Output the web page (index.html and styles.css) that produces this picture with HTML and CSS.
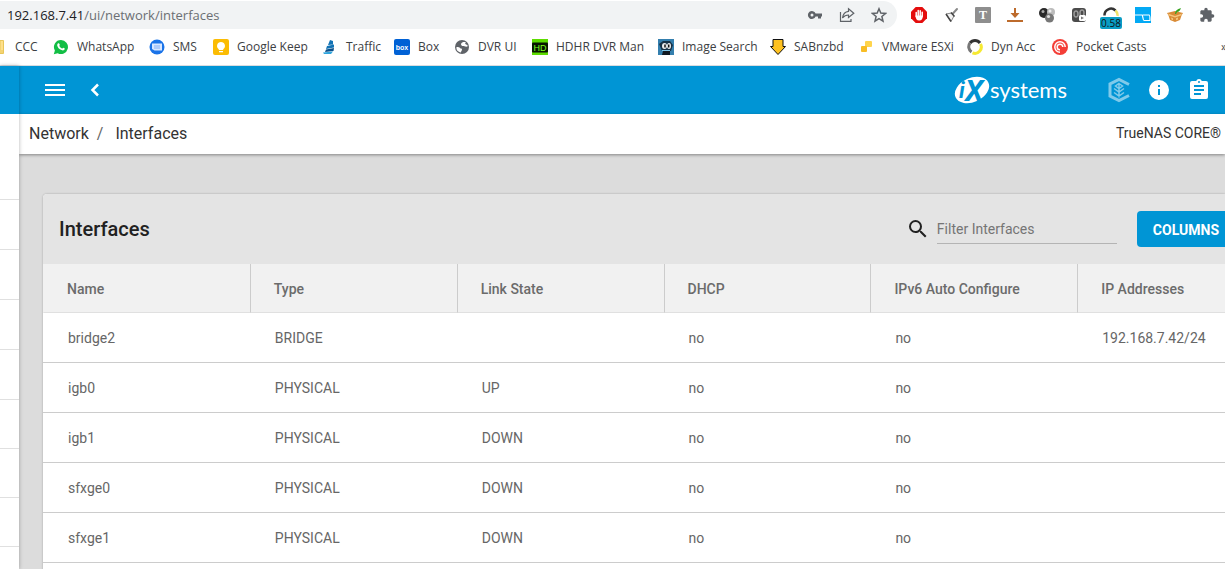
FILE: index.html
```html
<!DOCTYPE html>
<html lang="en">
<head>
    <meta charset="UTF-8">
    <meta name="viewport" content="width=device-width, initial-scale=1.0">
    <title>TrueNAS - Interfaces</title>
    <link rel="stylesheet" href="styles.css">
</head>
<body>

    <!-- Browser toolbar -->
    <div class="toolbar">
        <div class="omnibox">
            <div class="url">192.168.7.41<span class="url-path">/ui/network/interfaces</span></div>
            <button class="tool" aria-label="Passwords">
                <svg width="16" height="16" viewBox="0 0 16 16"><path fill="#5f6368" fill-rule="evenodd" d="M8.6 6.5A4 4 0 1 0 8.6 9.500H11v2h3v-2h1v-3zM5 6.500a1.500 1.500 0 1 1 0 3 1.500 1.500 0 0 1 0-3z"/></svg>
            </button>
            <button class="tool" aria-label="Share">
                <svg width="16" height="16" viewBox="0 0 16 16" fill="none" stroke="#5f6368" stroke-width="1.2"><path d="M1.500 5v9.400H12V12"/><path d="M9.500 1.800l5.300 4.400-5.300 4.300V8C7 8 5 9 3.500 11 4 7.500 6 4.800 9.500 4.400z"/></svg>
            </button>
            <button class="tool" aria-label="Bookmark this page">
                <svg width="16" height="16" viewBox="0 0 16 16" fill="none" stroke="#5f6368" stroke-width="1.5"><path d="M8 1.800l1.800 4.300 4.700.4-3.600 3 1.100 4.600L8 11.700l-4 2.400 1.100-4.600-3.600-3 4.700-.4z"/></svg>
            </button>
        </div>
        <div class="extensions">
            <button class="tool" aria-label="AdBlock">
                <svg width="16" height="16" viewBox="0 0 16 16"><path fill="#e40d0d" d="M4.700 0h6.600L16 4.700v6.600L11.300 16H4.700L0 11.300V4.700z"/><path fill="none" stroke="#fff" stroke-width="1.500" stroke-linecap="round" d="M5.200 5.500v4M7.200 3.500v5M9.200 3.700v5M11.200 5.200v4"/><path fill="#fff" d="M4.500 8.500h7.400c0 3-1.200 5-3.700 5s-3.700-2-3.700-5z"/></svg>
            </button>
            <button class="tool" aria-label="Cleaner">
                <svg width="16" height="16" viewBox="0 0 16 16"><path stroke="#888" stroke-width="2" stroke-linecap="round" d="M14 2L9.500 7"/><path fill="#f2f2f2" stroke="#888" d="M3 7l5.500-1L11 9l-3 5.500z"/><path stroke="#444" stroke-width="1.500" d="M8 5.500l3.500 4M3 7l5 7.500"/></svg>
            </button>
            <button class="tool" aria-label="Text tool">
                <svg width="16" height="16" viewBox="0 0 16 16"><rect width="16" height="16" rx="1" fill="#8e8e8e"/><text class="glyph-t" x="8" y="12" text-anchor="middle">T</text></svg>
            </button>
            <button class="tool" aria-label="Downloads">
                <svg width="16" height="16" viewBox="0 0 16 16"><path fill="#bd6b2c" d="M7 1h2v5h3.500L8 11 3.500 6H7zM0 13h16v2H0z"/></svg>
            </button>
            <button class="tool" aria-label="Spheres">
                <svg width="16" height="16" viewBox="0 0 16 16"><circle cx="5" cy="6" r="5" fill="#292929"/><circle cx="4" cy="4.500" r="1.500" fill="#aaa"/><circle cx="12" cy="5" r="4" fill="#bbb"/><circle cx="11" cy="4" r="1.500" fill="#eee"/><circle cx="10.500" cy="11" r="4.500" fill="#777"/><circle cx="9.500" cy="9.500" r="1.600" fill="#ddd"/></svg>
            </button>
            <button class="tool" aria-label="Recorder">
                <svg width="16" height="16" viewBox="0 0 16 16"><rect x="1" y="1" width="14" height="14" rx="3" fill="#4b4b4b"/><ellipse cx="5" cy="7" rx="2" ry="3" fill="none" stroke="#999" stroke-width="1.500"/><ellipse cx="11" cy="6" rx="2" ry="3" fill="none" stroke="#999" stroke-width="1.500"/><rect x="8" y="8" width="7" height="6" rx="1.500" fill="#fff"/><path fill="#777" d="M10 9.500l3 1.500-3 1.500z"/></svg>
            </button>
            <button class="tool" aria-label="Dyn Acc">
                <svg width="16" height="16" viewBox="0 0 16 16" fill="none" stroke-width="2.500"><path stroke="#333" d="M1.500 8.500A6.500 6.500 0 0 1 12.500 3.500"/><path stroke="#efe36a" d="M12.500 3.500A6.500 6.500 0 0 1 14.500 9"/></svg>
                <span class="badge">0.58</span>
            </button>
            <button class="tool" aria-label="Tab window">
                <svg width="16" height="16" viewBox="0 0 16 16"><rect width="16" height="16" fill="#03a9f4"/><path fill="none" stroke="#fff" stroke-width="1.200" d="M0 8h7c1 0 .8 5.500 2 5.500h6.500M7.500 8H14c1 0 1 1 1 5"/></svg>
            </button>
            <button class="tool" aria-label="Basket">
                <svg width="16" height="16" viewBox="0 0 16 16"><path fill="#d98a35" d="M0 6l8-2 8 2-1.500 2.500L13 13l-5 2-5-2-1.500-4.500z"/><path fill="#f4c67c" d="M1 6.500l7 2.500 7-2.500-1 2-6 2-6-2zM4 10.500l2 .7v2l-1.500-.7zM9 11.200l2-.7v2l-2 .8z"/><path fill="#36a321" d="M8 7c0-3 2-5 6-6-1 2-1 3.500-4 4l-1 2z"/></svg>
            </button>
            <button class="tool" aria-label="Extensions">
                <svg width="16" height="16" viewBox="0 0 24 24"><path fill="#5f6368" d="M20.500 11H19V7c0-1.100-.9-2-2-2h-4V3.500a2.500 2.500 0 0 0-5 0V5H4c-1.100 0-2 .9-2 2v3.800h1.500a2.700 2.700 0 0 1 0 5.400H2V20c0 1.100.9 2 2 2h3.800v-1.500a2.700 2.700 0 0 1 5.400 0V22H17c1.100 0 2-.9 2-2v-4h1.500a2.500 2.500 0 0 0 0-5z"/></svg>
            </button>
        </div>
    </div>

    <!-- Bookmarks bar -->
    <nav class="bookmarks">
        <a href="#" class="bookmark bookmark-cut">
            <svg width="5" height="16" viewBox="0 0 5 16"><path fill="#ffe08a" stroke="#e8c65a" d="M0 1.500h3.500v13H0zM2 11v3.500"/></svg>
            <span>CCC</span>
        </a>
        <a href="#" class="bookmark">
            <svg width="16" height="16" viewBox="0 0 16 16"><path fill="#12be45" d="M8 1a7 7 0 1 1-3.300 13.200L.8 15.300l1.100-3.800A7 7 0 0 1 8 1z"/><path fill="#fff" d="M5.300 4.300c.8-.5 1.200.7 1.500 1.500.1.500-.6.800-.5 1.200.6 1.200 1.500 2 2.700 2.500.5.100.8-.9 1.300-.8.8.4 1.800.8 1.500 1.400-.6 1.400-1.800 1.600-3.300 1C6 10.200 4.600 8.300 4.200 6.500c-.1-1 .4-1.800 1.100-2.200z"/></svg>
            <span>WhatsApp</span>
        </a>
        <a href="#" class="bookmark">
            <svg width="16" height="16" viewBox="0 0 16 16"><circle cx="8" cy="8" r="7.500" fill="#1a73e8"/><path fill="#d8e7ff" d="M3 4.500h10v7H5.500L3 10z"/><path fill="#aecbfa" d="M5 6h6v4H5z"/></svg>
            <span>SMS</span>
        </a>
        <a href="#" class="bookmark">
            <svg width="16" height="16" viewBox="0 0 16 16"><rect width="16" height="16" rx="2" fill="#fbbc04"/><path fill="#fff" d="M8 3a4 4 0 0 1 2.200 7.300V11H5.800v-.7A4 4 0 0 1 8 3zM6 12h4v1.200H6z"/></svg>
            <span>Google Keep</span>
        </a>
        <a href="#" class="bookmark">
            <svg width="16" height="16" viewBox="0 0 16 16"><path fill="#1273b5" d="M8 1l3 1v3.500L6 6zM5 7l7-1.500V8.500L4 10z"/><path fill="#0b4f8a" d="M4 10.500l8-1.500-.5 3L3 13z"/><path fill="#2fa5dd" d="M1 13.500l10-1-2 2.500H2z"/></svg>
            <span>Traffic</span>
        </a>
        <a href="#" class="bookmark">
            <svg width="16" height="16" viewBox="0 0 16 16"><rect width="16" height="16" rx="2" fill="#0061d5"/><text class="glyph-box" x="8" y="11" text-anchor="middle">box</text></svg>
            <span>Box</span>
        </a>
        <a href="#" class="bookmark">
            <svg width="16" height="16" viewBox="0 0 16 16"><circle cx="8" cy="8" r="7" fill="#5f6368"/><path fill="#fff" d="M2.500 8c2 0 3 .2 3.500 1s2 .2 2 1.500-1 1.500-1 3C4 13 2 11 2.500 8zM7 5c1-2 3-2.500 5-1.500C10.500 4 11 5.500 13.500 6v1.500c-2 .5-3.500-.5-4.500-.5S7 6.500 7 5z"/></svg>
            <span>DVR UI</span>
        </a>
        <a href="#" class="bookmark">
            <svg width="16" height="16" viewBox="0 0 16 16"><rect width="16" height="16" fill="#5ddc00"/><rect y="3.500" width="16" height="10" rx="1" fill="#071500"/><text class="glyph-hd" x="8" y="12" text-anchor="middle">HD</text></svg>
            <span>HDHR DVR Man</span>
        </a>
        <a href="#" class="bookmark">
            <svg width="16" height="16" viewBox="0 0 16 16"><rect width="16" height="16" fill="#347fae"/><path fill="#183246" d="M1 5l4-3h7l3 4-2 6H4z"/><ellipse cx="6.500" cy="7" rx="2.500" ry="3" fill="#eee"/><ellipse cx="11" cy="7" rx="2" ry="3" fill="#eee"/><path stroke="#111" stroke-width="1.500" d="M7 5.500v3M10.700 5.500v3"/><path fill="#101820" d="M5 12h7v4H4z"/><path stroke="#7bc4e8" d="M4 11.500h8"/></svg>
            <span>Image Search</span>
        </a>
        <a href="#" class="bookmark">
            <svg width="16" height="16" viewBox="0 0 16 16"><path fill="#ffc220" stroke="#111" d="M3 .5h10v7h2.500L8 15.500.5 7.500H3z"/></svg>
            <span>SABnzbd</span>
        </a>
        <a href="#" class="bookmark">
            <svg width="16" height="16" viewBox="0 0 16 16"><rect x="7" y="2" width="7" height="6" rx="1" fill="#ffd44c"/><rect x="3" y="7" width="6" height="6" rx="1" fill="#f8bd25"/></svg>
            <span>VMware ESXi</span>
        </a>
        <a href="#" class="bookmark">
            <svg width="16" height="16" viewBox="0 0 16 16" fill="none" stroke-width="3"><path stroke="#333" d="M13 4A6.300 6.300 0 0 0 3 4"/><path stroke="#777" d="M3 4a6.300 6.300 0 0 0 1.500 9"/><path stroke="#f6e932" d="M5.500 13.800A6.300 6.300 0 0 0 13.500 5"/></svg>
            <span>Dyn Acc</span>
        </a>
        <a href="#" class="bookmark">
            <svg width="16" height="16" viewBox="0 0 16 16"><circle cx="8" cy="8" r="8" fill="#f43e37"/><g fill="none" stroke="#fff" stroke-width="1.500"><path d="M8 13.200A5.200 5.200 0 1 1 13.200 8"/><path d="M8 10.800A2.800 2.800 0 1 1 10.800 8"/></g></svg>
            <span>Pocket Casts</span>
        </a>
        <a href="#" class="bookmark more">»</a>
    </nav>

    <div class="app">
        <aside class="sidenav">
            <div class="sidenav-brand"></div>
            <div class="sidenav-user"></div>
            <ul class="sidenav-list">
                <li></li>
                <li></li>
                <li></li>
                <li></li>
                <li></li>
                <li></li>
                <li></li>
                <li></li>
            </ul>
        </aside>

        <main class="content">
            <header class="topbar">
                <button class="topbar-btn" aria-label="Toggle menu">
                    <svg width="24" height="24" viewBox="0 0 24 24"><path fill="#fff" d="M2 6h20v2H2zm0 5h20v2H2zm0 5h20v2H2z"/></svg>
                </button>
                <button class="topbar-btn" aria-label="Collapse menu">
                    <svg width="24" height="24" viewBox="0 0 24 24"><path fill="none" stroke="#fff" stroke-width="2.500" d="M15 6.500L9.500 12l5.500 5.500"/></svg>
                </button>
                <a href="#" class="logo" aria-label="iXsystems">
                    <svg width="36" height="44" viewBox="0 0 36 44">
                        <ellipse cx="18" cy="22" rx="18" ry="12" fill="#fff" transform="rotate(-24 18 22)"/>
                        <text class="logo-i" x="5" y="30">i</text>
                        <text class="logo-x" x="11" y="33">X</text>
                    </svg>
                    <span class="logo-text">systems</span>
                </a>
                <button class="topbar-btn truecommand" aria-label="TrueCommand">
                    <svg width="24" height="26" viewBox="0 0 24 26" fill="none" stroke="#fff" stroke-width="3"><path d="M22 7.500L12 2.500l-9 4.500v12l9 4.500 10-5"/><path stroke-width="1.500" d="M12 7.500v13M12 6.500l3.500 2.500-3.500 2.500L8.500 9zM7 11.500l5 3.500 5-3.500M7 15.500l5 3.500 5-3.500"/></svg>
                </button>
                <button class="topbar-btn" aria-label="System information">
                    <svg width="24" height="24" viewBox="0 0 24 24"><path fill="#fff" d="M12 2a10 10 0 1 0 0 20 10 10 0 0 0 0-20zm1 15h-2v-6h2v6zm0-8h-2V7h2v2z"/></svg>
                </button>
                <button class="topbar-btn" aria-label="Tasks">
                    <svg width="24" height="24" viewBox="0 0 24 24"><path fill="#fff" d="M19 3h-4.200a3 3 0 0 0-5.600 0H5a2 2 0 0 0-2 2v14a2 2 0 0 0 2 2h14a2 2 0 0 0 2-2V5a2 2 0 0 0-2-2zm-7 0a1 1 0 1 1 0 2 1 1 0 0 1 0-2zm2 14H7v-2h7v2zm3-4H7v-2h10v2zm0-4H7V7h10v2z"/></svg>
                </button>
            </header>

            <div class="breadcrumb">
                <a href="#">Network</a>
                <span class="slash">/</span>
                <a href="#">Interfaces</a>
                <span class="product">TrueNAS CORE®</span>
            </div>

            <section class="card">
                <div class="card-header">
                    <h1>Interfaces</h1>
                    <label class="search-icon" for="filter" aria-label="Filter">
                        <svg width="24" height="24" viewBox="0 0 24 24"><path fill="#222" d="M15.500 14h-.79l-.28-.27A6.470 6.470 0 0 0 16 9.500 6.500 6.500 0 1 0 9.500 16c1.610 0 3.090-.59 4.230-1.570l.27.28v.79l5 4.990L20.490 19l-4.990-5zm-6 0C7.010 14 5 11.990 5 9.500S7.010 5 9.500 5 14 7.010 14 9.500 11.990 14 9.500 14z"/></svg>
                    </label>
                    <input type="text" id="filter" class="filter" placeholder="Filter Interfaces">
                    <button class="columns-btn">COLUMNS</button>
                </div>

                <table class="interfaces">
                    <thead>
                        <tr>
                            <th>Name</th>
                            <th>Type</th>
                            <th>Link State</th>
                            <th>DHCP</th>
                            <th>IPv6 Auto Configure</th>
                            <th>IP Addresses</th>
                        </tr>
                    </thead>
                    <tbody>
                        <tr>
                            <td>bridge2</td>
                            <td>BRIDGE</td>
                            <td></td>
                            <td>no</td>
                            <td>no</td>
                            <td>192.168.7.42/24</td>
                        </tr>
                        <tr>
                            <td>igb0</td>
                            <td>PHYSICAL</td>
                            <td>UP</td>
                            <td>no</td>
                            <td>no</td>
                            <td></td>
                        </tr>
                        <tr>
                            <td>igb1</td>
                            <td>PHYSICAL</td>
                            <td>DOWN</td>
                            <td>no</td>
                            <td>no</td>
                            <td></td>
                        </tr>
                        <tr>
                            <td>sfxge0</td>
                            <td>PHYSICAL</td>
                            <td>DOWN</td>
                            <td>no</td>
                            <td>no</td>
                            <td></td>
                        </tr>
                        <tr>
                            <td>sfxge1</td>
                            <td>PHYSICAL</td>
                            <td>DOWN</td>
                            <td>no</td>
                            <td>no</td>
                            <td></td>
                        </tr>
                    </tbody>
                </table>
            </section>
        </main>
    </div>

</body>
</html>
```
FILE: styles.css
```css
* {
    box-sizing: border-box;
}

body {
    margin: 0;
    height: 100vh;
    display: flex;
    flex-direction: column;
    overflow: hidden;
    background-color: #fff;
    font-family: Roboto, "Liberation Sans", sans-serif;
    font-size: 14px;
}

a {
    color: inherit;
    text-decoration: none;
}

button {
    border: none;
    background: none;
    padding: 0;
    font-family: inherit;
    cursor: pointer;
}

svg {
    display: block;
    flex-shrink: 0;
}

/* Browser toolbar */
.toolbar {
    display: flex;
    flex-shrink: 0;
    gap: 6px;
    padding: 1px 2px 1px 0;
    font-family: "Open Sans", "Noto Sans", sans-serif;
}

.omnibox {
    flex: 1;
    display: flex;
    align-items: center;
    height: 28px;
    padding: 0 2px 0 7px;
    background-color: #f1f3f4;
    border-radius: 0 14px 14px 0;
}

.url {
    flex: 1;
    font-size: 13px;
    color: #202124;
}

.url-path {
    color: #6b6f73;
}

.extensions {
    display: flex;
}

.tool {
    position: relative;
    display: flex;
    align-items: center;
    justify-content: center;
    width: 32px;
    height: 28px;
}

.badge {
    position: absolute;
    left: 5px;
    top: 16px;
    width: 22px;
    border-radius: 2px;
    background-color: #0a9dc4;
    color: #111;
    font: 10px/12px "Open Sans", sans-serif;
    text-align: center;
}

/* Bookmarks bar */
.bookmarks {
    display: grid;
    grid-template-columns: 53px 96px 64px 109px 72px 60px 78px 126px 112px 88px 109px 85px 1fr auto;
    align-items: center;
    flex-shrink: 0;
    height: 36px;
    padding-bottom: 2px;
    border-bottom: 1px solid #dadce0;
    font-family: "Open Sans", "Noto Sans", sans-serif;
    font-size: 12px;
    color: #3c4043;
    white-space: nowrap;
}

.bookmark {
    display: flex;
    align-items: center;
    gap: 8px;
}

.bookmark-cut {
    gap: 10px;
}

.more {
    width: 4px;
}

/* Letters inside the small icons */
.glyph-t {
    font: bold 12px "Liberation Serif", serif;
    fill: #fff;
}

.glyph-box {
    font: bold 7px "Liberation Sans", sans-serif;
    fill: #fff;
}

.glyph-hd {
    font: 9px "Liberation Sans", sans-serif;
    fill: #7cff20;
}

/* App */
.app {
    display: flex;
    flex: 1;
    min-height: 0;
}

.sidenav {
    z-index: 1;
    width: 19px;
    background-color: #fff;
    box-shadow: 0 0 4px rgba(0, 0, 0, 0.3);
    overflow: hidden;
}

.sidenav-brand {
    height: 48px;
    background-color: #0095d5;
}

.sidenav-user {
    height: 85px;
}

.sidenav-list {
    list-style: none;
    margin: 0;
    padding: 0;
}

.sidenav-list li {
    height: 50px;
    border-top: 1px solid #e0e0e0;
}

.sidenav-list li:nth-child(n+5) {
    height: 49px;
}

.content {
    flex: 1;
    min-width: 0;
    overflow: hidden;
    background-color: #dcdcdc;
}

.topbar {
    display: flex;
    align-items: center;
    gap: 16px;
    height: 48px;
    padding: 0 14px 0 24px;
    background-color: #0095d5;
}

.topbar-btn {
    display: flex;
}

.truecommand {
    opacity: 0.5;
}

.logo {
    display: flex;
    align-items: center;
    margin-left: auto;
    margin-right: 24px;
    color: #fff;
}

.logo-text {
    font-family: Lato, sans-serif;
    font-size: 22px;
    font-weight: 400;
    line-height: 30px;
}

.logo-i,
.logo-x {
    fill: #0095d5;
    font-family: Roboto, sans-serif;
    font-style: italic;
    font-weight: 700;
}

.logo-i {
    font-size: 22px;
}

.logo-x {
    font-size: 30px;
}

.breadcrumb {
    display: flex;
    align-items: center;
    gap: 8px;
    height: 40px;
    padding: 0 4px 2px 10px;
    background-color: #fff;
    box-shadow: 0 1px 3px rgba(0, 0, 0, 0.4);
    font-size: 16px;
    color: #333;
}

.slash {
    margin-right: 4px;
    color: #666;
}

.product {
    margin-left: auto;
    font-size: 14px;
}

/* Interfaces card */
.card {
    min-height: 400px;
    margin: 40px 0 0 24px;
    background-color: #fff;
    border-top-left-radius: 4px;
    box-shadow: 0 0 2px rgba(0, 0, 0, 0.3);
    overflow: hidden;
}

.card-header {
    display: flex;
    align-items: center;
    height: 70px;
    padding-left: 16px;
    background-color: #e4e4e4;
}

.card-header h1 {
    flex: 1;
    margin: 0;
    font-size: 20px;
    font-weight: 500;
    color: #212121;
}

.search-icon {
    margin-right: 7px;
}

.filter {
    width: 180px;
    height: 30px;
    margin-right: 20px;
    padding: 0;
    border: none;
    border-bottom: 1px solid #b4b4b4;
    border-radius: 0;
    background: none;
    font-family: inherit;
    font-size: 14px;
    color: #333;
    outline: none;
}

.filter::placeholder {
    color: #757575;
}

.columns-btn {
    height: 36px;
    padding: 2px 6px 0 16px;
    border-radius: 4px 0 0 4px;
    background-color: #0095d5;
    color: #fff;
    font-size: 14px;
    font-weight: 700;
}

.interfaces {
    width: 100%;
    table-layout: fixed;
    border-collapse: separate;
    border-spacing: 0;
    text-align: left;
}

.interfaces th {
    width: 17.5%;
    height: 49px;
    padding: 2px 0 0 23px;
    border-left: 1px solid #ccc;
    border-bottom: 1px solid #e0e0e0;
    background-color: #f1f1f1;
    font-weight: 500;
    color: #6b6b6b;
}

.interfaces th:first-child {
    border-left-color: transparent;
}

.interfaces th:last-child {
    width: auto;
}

.interfaces td {
    height: 50px;
    padding: 0 0 0 25px;
    border-bottom: 1px solid #ccc;
    color: #666;
}
```
